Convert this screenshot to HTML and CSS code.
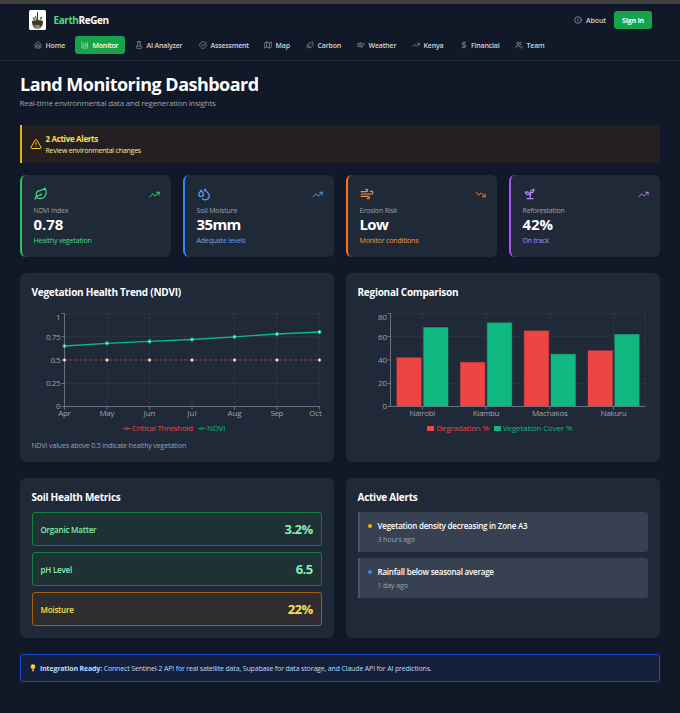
FILE: index.html
```html
<!DOCTYPE html>
<html lang="en">
<head>
<meta charset="utf-8">
<title>EarthReGen</title>
<link rel="stylesheet" href="styles.css">
</head>
<body>
<svg class="defs" width="0" height="0" aria-hidden="true">
  <symbol id="leaf" viewBox="0 0 24 24"><path d="M11 20A7 7 0 0 1 9.8 6.1C15.5 5 17 4.48 19 2c1 2 2 4.18 2 8 0 5.5-4.78 10-10 10Z"/><path d="M2 21c0-3 1.85-5.36 5.08-6C9.5 14.52 12 13 13 12"/></symbol>
  <symbol id="wind" viewBox="0 0 24 24"><path d="M17.7 7.7a2.5 2.5 0 1 1 1.8 4.3H2"/><path d="M9.6 4.6A2 2 0 1 1 11 8H2"/><path d="M12.6 19.4A2 2 0 1 0 14 16H2"/></symbol>
  <symbol id="up" viewBox="0 0 24 24"><path d="m22 7-8.5 8.5-5-5L2 17"/><path d="M16 7h6v6"/></symbol>
  <symbol id="down" viewBox="0 0 24 24"><path d="m22 17-8.500-8.500-5 5L2 7"/><path d="M16 17h6v-6"/></symbol>
</svg>
<div class="top-strip"></div>
<header class="header">
  <div class="brand-row">
    <svg class="logo" viewBox="0 0 17 20"><rect width="17" height="20" rx="1.500" fill="#fff"/><path d="M3 11.500Q8.500 9.500 14 11.500Q14 16.500 10.500 18.500H6.500Q3 16.500 3 11.500Z" fill="#4a352b"/><path d="M4 14.500l3 1 2-1 3 2-2 1.500H7Z" fill="#a48371"/><ellipse cx="8.500" cy="11.500" rx="5.700" ry="1.500" fill="#36412a"/><path d="M8.500 2V11" stroke="#3c3229" stroke-width="1"/><path d="M4.500 7.500l1.500 3M12.500 7l-2 4M6.500 6l1 4" stroke="#6f8651" stroke-width="1.300"/><circle cx="4.800" cy="8.500" r="1.200" fill="#7c9365"/><circle cx="12" cy="8" r="1.200" fill="#71865a"/></svg>
    <div class="brand"><span class="brand-earth">Earth</span>ReGen</div>
    <a class="about"><svg class="ic" viewBox="0 0 24 24"><circle cx="12" cy="12" r="10"/><path d="M12 16v-4M12 8h.01"/></svg><span>About</span></a>
    <button class="sign-in">Sign In</button>
  </div>
  <nav class="nav">
    <a class="item"><svg class="ic" viewBox="0 0 24 24"><path d="M3 10a2 2 0 0 1 .7-1.500l7-6a2 2 0 0 1 2.600 0l7 6A2 2 0 0 1 21 10v9a2 2 0 0 1-2 2H5a2 2 0 0 1-2-2z"/><path d="M7 15a5 5 0 0 1 10 0M7 17h10"/></svg><span>Home</span></a>
    <a class="item active"><svg class="ic" viewBox="0 0 24 24"><path d="M3 3v18h18M8 17V9M13 17V5M18 17v-8"/><path d="M20 3v14"/></svg><span>Monitor</span></a>
    <a class="item"><svg class="ic" viewBox="0 0 24 24"><path d="M9 2v7L4 19a2 2 0 0 0 2 3h12a2 2 0 0 0 2-3L15 9V2M7 2h10M7 15h10"/></svg><span>AI Analyzer</span></a>
    <a class="item"><svg class="ic" viewBox="0 0 24 24"><path d="M21.800 10A10 10 0 1 1 17 3.300"/><path d="m8 11 4 4L22 4"/></svg><span>Assessment</span></a>
    <a class="item"><svg class="ic" viewBox="0 0 24 24"><path d="M2 6l6-3 8 3 6-3v15l-6 3-8-3-6 3ZM8 3v15M16 6v15"/></svg><span>Map</span></a>
    <a class="item"><svg class="ic"><use href="#leaf"/></svg><span>Carbon</span></a>
    <a class="item"><svg class="ic"><use href="#wind"/></svg><span>Weather</span></a>
    <a class="item"><svg class="ic"><use href="#up"/></svg><span>Kenya</span></a>
    <a class="item"><svg class="ic" viewBox="0 0 24 24"><path d="M12 2v20M17 5H9.500a3.500 3.500 0 0 0 0 7h5a3.500 3.500 0 0 1 0 7H6"/></svg><span>Financial</span></a>
    <a class="item"><svg class="ic" viewBox="0 0 24 24"><circle cx="9" cy="7" r="4"/><path d="M2 21v-2a4 4 0 0 1 4-4h6a4 4 0 0 1 4 4v2M22 21v-2a4 4 0 0 0-3-3.900M16 3.100a4 4 0 0 1 0 7.800"/></svg><span>Team</span></a>
  </nav>
</header>

<main class="main">
  <h1 class="title">Land Monitoring Dashboard</h1>
  <p class="subtitle">Real-time environmental data and regeneration insights</p>

  <section class="alert">
    <svg class="alert-icon" viewBox="0 0 24 24"><path d="m21.730 18-8-14a2 2 0 0 0-3.480 0l-8 14A2 2 0 0 0 4 21h16a2 2 0 0 0 1.730-3Z"/><path d="M12 9v4M12 17h.01"/></svg>
    <div><div class="alert-title">2 Active Alerts</div><div class="alert-text">Review environmental changes</div></div>
  </section>

  <section class="stats">
    <article class="card stat green">
      <div class="stat-top"><svg class="stat-icon"><use href="#leaf"/></svg><svg class="trend"><use href="#up"/></svg></div>
      <div class="stat-label">NDVI Index</div><div class="stat-value">0.78</div><div class="stat-note">Healthy vegetation</div>
    </article>
    <article class="card stat blue">
      <div class="stat-top"><svg class="stat-icon" viewBox="0 0 24 24"><path d="M7 16.300c2.200 0 4-1.830 4-4.050 0-1.160-.57-2.260-1.710-3.190S7.290 6.750 7 5.300c-.29 1.450-1.140 2.840-2.290 3.760S3 11.100 3 12.250c0 2.220 1.800 4.050 4 4.050z"/><path d="M12.560 6.600A10.970 10.970 0 0 0 14 3.020c.5 2.500 2 4.900 4 6.500s3 3.500 3 5.500a6.980 6.980 0 0 1-11.910 4.970"/></svg><svg class="trend"><use href="#up"/></svg></div>
      <div class="stat-label">Soil Moisture</div><div class="stat-value tight">35mm</div><div class="stat-note">Adequate levels</div>
    </article>
    <article class="card stat orange">
      <div class="stat-top"><svg class="stat-icon"><use href="#wind"/></svg><svg class="trend"><use href="#down"/></svg></div>
      <div class="stat-label">Erosion Risk</div><div class="stat-value tight">Low</div><div class="stat-note">Monitor conditions</div>
    </article>
    <article class="card stat purple">
      <div class="stat-top"><svg class="stat-icon" viewBox="0 0 24 24"><path d="M7 20h10M10 20c5.500-2.500.8-6.400 3-10"/><path d="M9.500 9.400c1.100.8 1.800 2.200 2.300 3.700-2 .4-3.500.4-4.800-.3-1.200-.6-2.300-1.900-3-4.200 2.800-.5 4.400 0 5.500.8z"/><path d="M14.100 6a7 7 0 0 0-1.100 4c1.900-.1 3.300-.6 4.300-1.400 1-1 1.600-2.300 1.700-4.600-2.700.1-4 1-4.900 2z"/></svg><svg class="trend"><use href="#up"/></svg></div>
      <div class="stat-label">Reforestation</div><div class="stat-value">42%</div><div class="stat-note">On track</div>
    </article>
  </section>

  <section class="charts">
    <article class="card panel">
      <h2 class="panel-title trend-title">Vegetation Health Trend (NDVI)</h2>
      <svg class="chart" viewBox="32 305 290 132">
        <path class="grid" d="M64.500 313.500H319.500M64.500 336.500H319.500M64.500 360H319.500M64.500 383.500H319.500M107 313.500V406M149.500 313.500V406M192 313.500V406M234.500 313.500V406M277 313.500V406M319.500 313.500V406"/>
        <path class="axis" d="M61.500 313.500H64.500V406.500H319.500M61.500 336.500H64.500M61.500 360H64.500M61.500 383.500H64.500M61.500 406.500H64.500M64.500 406.500v3M107 406.500v3M149.500 406.500v3M192 406.500v3M234.500 406.500v3M277 406.500v3M319.500 406.500v3"/>
        <g class="tick end"><text x="60.500" y="320">1</text><text x="60.500" y="340" textLength="14.500">0.75</text><text x="60.500" y="363" textLength="10">0.5</text><text x="60.500" y="386" textLength="14.500">0.25</text><text x="60.500" y="409">0</text></g>
        <g class="tick mid"><text x="64.500" y="416" textLength="12.500">Apr</text><text x="107" y="416" textLength="15">May</text><text x="149.500" y="416" textLength="12">Jun</text><text x="192" y="416" textLength="9.500">Jul</text><text x="234.500" y="416" textLength="14">Aug</text><text x="277" y="416" textLength="13">Sep</text><text x="315.500" y="416" textLength="12.500">Oct</text></g>
        <path d="M64.500 360H319.500" stroke="#ef4444" stroke-opacity=".65" stroke-dasharray="2.500 2.500"/>
        <path d="M64.500 346L107 343.300L149.500 341.400L192 339.500L234.500 336.800L277 334L319.500 332" fill="none" stroke="#10b981" stroke-width="1.300"/>
        <g fill="#fff" stroke="#ef4444" stroke-width=".5"><circle cx="64.500" cy="360" r="1.500"/><circle cx="107" cy="360" r="1.500"/><circle cx="149.500" cy="360" r="1.500"/><circle cx="192" cy="360" r="1.500"/><circle cx="234.500" cy="360" r="1.500"/><circle cx="277" cy="360" r="1.500"/><circle cx="319.500" cy="360" r="1.500"/></g>
        <g fill="#d1fae5" stroke="#10b981" stroke-width="1.200"><circle cx="64.500" cy="346" r="1.500"/><circle cx="107" cy="343.300" r="1.500"/><circle cx="149.500" cy="341.400" r="1.500"/><circle cx="192" cy="339.500" r="1.500"/><circle cx="234.500" cy="336.800" r="1.500"/><circle cx="277" cy="334" r="1.500"/><circle cx="319.500" cy="332" r="1.500"/></g>
        <g class="red-key"><path d="M123 428.500h2.500M128 428.500h2.500"/><circle cx="126.700" cy="428.500" r="1.200"/><text x="132" y="431" textLength="61">Critical Threshold</text></g>
        <g class="green-key"><path d="M198 428.500h2.500M203 428.500h2.500"/><circle cx="201.700" cy="428.500" r="1.200"/><text x="207" y="431" textLength="18.500">NDVI</text></g>
      </svg>
      <p class="chart-note">NDVI values above 0.5 indicate healthy vegetation</p>
    </article>
    <article class="card panel">
      <h2 class="panel-title">Regional Comparison</h2>
      <svg class="chart" viewBox="358 305 290 132">
        <path class="grid" d="M390.500 313.500H645.500M390.500 336.500H645.500M390.500 360H645.500M390.500 383.500H645.500M422.400 313.500V406M486.100 313.500V406M549.900 313.500V406M613.600 313.500V406M645.500 313.500V406"/>
        <path class="axis" d="M387.500 313.500H390.500V406.500H645.500M387.500 336.500H390.500M387.500 360H390.500M387.500 383.500H390.500M387.500 406.500H390.500M422.400 406.500v3M486.100 406.500v3M549.900 406.500v3M613.600 406.500v3"/>
        <g class="tick end"><text x="387" y="320" textLength="9">80</text><text x="387" y="340" textLength="9">60</text><text x="387" y="363" textLength="9">40</text><text x="387" y="386" textLength="9">20</text><text x="387" y="409">0</text></g>
        <g class="tick mid"><text x="422.400" y="416" textLength="26">Nairobi</text><text x="486.100" y="416" textLength="26.500">Kiambu</text><text x="549.900" y="416" textLength="36">Machakos</text><text x="613.600" y="416" textLength="26">Nakuru</text></g>
        <g fill="#ef4444" stroke="#ef4444" stroke-opacity=".35"><rect x="396.800" y="357.700" width="24.500" height="48.300"/><rect x="460.400" y="362.300" width="24.500" height="43.700"/><rect x="524.200" y="330.900" width="24.500" height="75.100"/><rect x="588" y="350.700" width="24.500" height="55.300"/></g>
        <g fill="#10b981" stroke="#10b981" stroke-opacity=".35"><rect x="423.600" y="327.500" width="24.500" height="78.500"/><rect x="487.300" y="322.800" width="24.500" height="83.200"/><rect x="551" y="354.200" width="24.500" height="51.800"/><rect x="614.700" y="334.400" width="24.500" height="71.600"/></g>
        <rect x="427" y="426" width="7" height="5" fill="#ef4444"/><text x="436.500" y="431" fill="#ef4444" textLength="52.500">Degradation %</text>
        <rect x="494" y="426" width="7" height="5" fill="#10b981"/><text x="503" y="431" fill="#10b981" textLength="69.500">Vegetation Cover %</text>
      </svg>
    </article>
  </section>

  <section class="lower">
    <article class="card panel">
      <h2 class="panel-title soil-title">Soil Health Metrics</h2>
      <div class="rows">
        <div class="metric good"><span class="organic">Organic Matter</span><b>3.2%</b></div>
        <div class="metric good"><span>pH Level</span><b>6.5</b></div>
        <div class="metric warn"><span>Moisture</span><b>22%</b></div>
      </div>
    </article>
    <article class="card panel">
      <h2 class="panel-title">Active Alerts</h2>
      <div class="rows">
        <div class="event"><i class="dot amber"></i><div><div class="event-title">Vegetation density decreasing in Zone A3</div><div class="event-time">3 hours ago</div></div></div>
        <div class="event"><i class="dot azure"></i><div><div class="event-title">Rainfall below seasonal average</div><div class="event-time">1 day ago</div></div></div>
      </div>
    </article>
  </section>

  <section class="banner">
    <svg class="bulb" viewBox="0 0 6 8"><path d="M3 .3A2.400 2.400 0 0 0 .6 2.700C.6 4 1.900 4.500 2 5.600H4C4.100 4.500 5.400 4 5.400 2.700A2.400 2.400 0 0 0 3 .3Z" fill="#fbbf24"/><circle cx="2.600" cy="2.200" r="1" fill="#fde68a"/><path d="M2 5.800H4V7.200H2Z" fill="#9ca3af"/></svg>
    <p class="banner-text"><b>Integration Ready:</b> Connect Sentinel-2 API for real satellite data, Supabase for data storage, and Claude API for AI predictions.</p>
  </section>
</main>
</body>
</html>
```
FILE: styles.css
```css
* { box-sizing: border-box; }
body { margin: 0; height: 713px; overflow: hidden; background: #111827; color: #fff; font-family: "Open Sans", "Noto Sans", sans-serif; font-size: 8px; }
h1, h2, p { margin: 0; }
svg { display: block; flex: none; }
.defs { position: absolute; }
.top-strip { height: 4px; background: #404040; }

.header { height: 57px; border-bottom: 1px solid #1f2937; padding: 6px 28px 0; }
.brand-row { display: flex; align-items: center; height: 20px; padding-left: 1px; }
.logo { width: 17px; height: 20px; }
.brand { margin-left: 7.5px; font-size: 10px; font-weight: 700; letter-spacing: -.42px; }
.brand-earth { color: #4ade80; }
.ic { width: 8px; height: 8px; }
.ic, .trend, .stat-icon, .alert-icon { fill: none; stroke: currentColor; stroke-width: 2; stroke-linecap: round; stroke-linejoin: round; }
.about { display: flex; align-items: center; gap: 4px; margin-left: auto; color: #d1d5db; font-size: 7px; font-weight: 600; letter-spacing: -.1px; }
.about .ic { opacity: .8; }
.sign-in { width: 38px; height: 18px; margin-left: 8px; padding: 0; border: 0; border-radius: 3px; background: #16a34a; color: #fff; font: 700 7px "Open Sans", sans-serif; letter-spacing: -.2px; }
.nav { display: grid; grid-template-columns: 43px 50px 60px 61px 38px 47px 51px 43.5px 51.5px 41px; gap: 4px; margin-top: 6px; }
.item { display: flex; align-items: center; gap: 3.5px; height: 18px; padding-left: 6px; border-radius: 3px; color: #d1d5db; font-size: 7px; font-weight: 600; white-space: nowrap; letter-spacing: -.18px; }
.item .ic { opacity: .7; }
.active { background: #16a34a; color: #fff; }

.main { padding: 12px 20px 0; }
.title { font-size: 18px; line-height: 22px; font-weight: 700; letter-spacing: -.52px; }
.subtitle { height: 12px; margin: 2px 0 0 -.5px; color: #9ca3af; line-height: 12px; letter-spacing: -.22px; }
.alert { display: flex; align-items: center; gap: 3.5px; height: 38px; margin-top: 16px; padding-left: 8px; border-left: 2px solid #eab308; border-radius: 0 4px 4px 0; background: #251f22; }
.alert-icon { width: 12px; height: 12px; color: #facc15; }
.alert-title { color: #fde047; font-weight: 700; line-height: 12px; letter-spacing: -.33px; }
.alert-text { padding-top: 1px; color: #fef08a; font-size: 7px; line-height: 10px; letter-spacing: -.2px; }

.card { border-radius: 6px; background: #1f2937; }
.stats { display: grid; grid-template-columns: repeat(4, 1fr); gap: 12px; margin-top: 12px; }
.stat { height: 82px; padding: 12px 11px 0 11.5px; border-left: 2px solid; }
.stat-top { display: flex; justify-content: space-between; align-items: center; height: 14px; margin-bottom: 4px; }
.stat-icon { width: 14px; height: 14px; }
.trend { width: 11px; height: 11px; }
.stat-label { color: #9ca3af; font-size: 7px; line-height: 11px; letter-spacing: -.14px; }
.stat-value { margin-top: -1px; color: #fff; font-size: 15px; font-weight: 700; line-height: 18px; letter-spacing: -.1px; }
.tight { letter-spacing: -.6px; }
.stat-note { margin-top: 2px; font-size: 7px; line-height: 11px; letter-spacing: -.17px; }
.green { border-color: #22c55e; color: #4ade80; }
.blue { border-color: #3b82f6; color: #60a5fa; }
.orange { border-color: #f97316; color: #fb923c; }
.purple { border-color: #a855f7; color: #c084fc; }

.charts, .lower { display: grid; grid-template-columns: 1fr 1fr; gap: 12px; margin-top: 16px; }
.panel { padding: 12px 12px 0; }
.charts .panel { height: 189px; }
.lower .panel { height: 160px; }
.panel-title { height: 16px; margin-left: -.5px; font-size: 10px; font-weight: 700; line-height: 15px; letter-spacing: -.26px; }
.chart { width: 290px; height: 132px; margin-top: 4px; font-size: 8px; }
.grid { fill: none; stroke: #374151; stroke-width: .75; stroke-dasharray: 2 2; }
.axis { fill: none; stroke: #6b7280; stroke-width: 1; }
.tick { fill: #9ca3af; }
.end { text-anchor: end; }
.mid { text-anchor: middle; }
.red-key { fill: #ef4444; }
.green-key { fill: #10b981; }
.red-key path, .red-key circle { fill: none; stroke: #ef4444; stroke-width: .8; }
.green-key path, .green-key circle { fill: none; stroke: #10b981; stroke-width: .8; }
.chart-note { margin: 3px 0 0 -.5px; color: #9ca3af; font-size: 7px; line-height: 11px; letter-spacing: -.15px; }

.rows { display: grid; gap: 6px; margin-top: 6px; }
.metric { display: flex; align-items: center; justify-content: space-between; height: 34px; padding: 0 8.5px 0 7.5px; border: 1px solid; border-radius: 3px; }
.metric span { font-weight: 600; letter-spacing: -.2px; }
.metric b { font-size: 13px; letter-spacing: -.6px; }
.good { border-color: #15803d; background: #1e3134; color: #86efac; }
.warn { border-color: #a16207; background: #302d30; color: #fde047; }
.event { display: flex; height: 40px; padding: 8px 0 0 8px; border-left: 2px solid #4b5563; border-radius: 0 3px 3px 0; background: #374151; }
.dot { width: 4px; height: 4px; margin: 4px 5.500px 0 0; border-radius: 50%; }
.amber { background: #eab308; }
.azure { background: #3b82f6; }
.event-title { font-weight: 600; line-height: 12px; letter-spacing: -.22px; }
.event-time { margin-top: 2px; color: #9ca3af; font-size: 7px; line-height: 11px; letter-spacing: -.1px; }

.banner { display: flex; align-items: center; height: 28px; margin-top: 16px; padding-left: 9px; border: 1px solid #1d4ed8; border-radius: 3px; background: #141f3b; color: #bfdbfe; }
.bulb { width: 6px; height: 8px; margin-right: 4px; }
.banner-text { font-size: 7px; white-space: nowrap; letter-spacing: -.155px; }
```
